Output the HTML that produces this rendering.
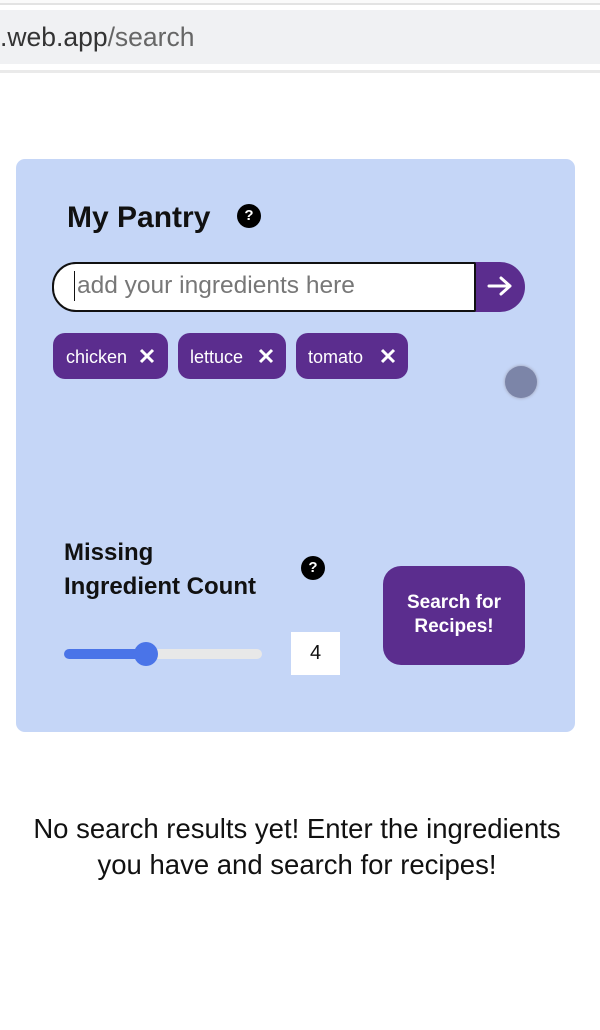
<!DOCTYPE html>
<html><head><style>
*{margin:0;padding:0;box-sizing:border-box}
body{width:600px;height:1030px;background:#fff;position:relative;overflow:hidden;font-family:"Liberation Sans",sans-serif}
.a{position:absolute}
</style></head><body>
<div class="a" style="left:0;top:0;width:600px;height:5px;border-bottom:2px solid #e3e3e3;background:#fafafa"></div>
<div class="a" style="left:0;top:10px;width:600px;height:54px;background:#f0f1f3"></div>
<div class="a" style="left:0;top:21px;font-size:26.5px;color:#333;line-height:32px">.web.app<span style="color:#666">/search</span></div>
<div class="a" style="left:0;top:70px;width:600px;height:3px;background:#eaeaea"></div>

<div class="a" style="left:16px;top:159px;width:559px;height:573px;background:#c5d6f7;border-radius:9px"></div>
<div class="a" style="left:67px;top:200px;font-size:30px;font-weight:bold;line-height:36px;color:#111">My Pantry</div>
<div class="a" style="left:237px;top:204px;width:24px;height:24px;border-radius:50%;background:#000;color:#fff;font-size:15px;font-weight:bold;text-align:center;line-height:24px">?</div>

<div class="a" style="left:52px;top:262px;width:473px;height:50px;background:#5b2d8e;border-radius:25px"></div>
<div class="a" style="left:52px;top:262px;width:424px;height:50px;background:#fff;border:2px solid #111;border-radius:24px 2px 2px 24px"></div>
<div class="a" style="left:74px;top:271px;font-size:24.5px;color:#777;line-height:30px;border-left:1px solid #111;padding-left:2px">add your ingredients here</div>
<svg class="a" style="left:486px;top:274px" width="28" height="24" viewBox="0 0 28 24"><path d="M3 12H24M15 4L24 12L15 20" stroke="#fff" stroke-width="3" fill="none" stroke-linecap="round" stroke-linejoin="round"/></svg>

<div class="a" style="left:53px;top:333px;width:115px;height:46px;background:#5b2d8e;border-radius:12px"></div>
<div class="a" style="left:178px;top:333px;width:108px;height:46px;background:#5b2d8e;border-radius:12px"></div>
<div class="a" style="left:296px;top:333px;width:112px;height:46px;background:#5b2d8e;border-radius:12px"></div>
<div class="a" style="left:66px;top:346px;font-size:18px;color:#fff;line-height:22px">chicken</div>
<div class="a" style="left:190px;top:346px;font-size:18px;color:#fff;line-height:22px">lettuce</div>
<div class="a" style="left:308px;top:346px;font-size:18px;color:#fff;line-height:22px">tomato</div>
<svg class="a" style="left:139px;top:348px" width="16" height="16"><path d="M2 2L14 14M14 2L2 14" stroke="#fff" stroke-width="3"/></svg>
<svg class="a" style="left:258px;top:348px" width="16" height="16"><path d="M2 2L14 14M14 2L2 14" stroke="#fff" stroke-width="3"/></svg>
<svg class="a" style="left:380px;top:348px" width="16" height="16"><path d="M2 2L14 14M14 2L2 14" stroke="#fff" stroke-width="3"/></svg>
<div class="a" style="left:505px;top:366px;width:32px;height:32px;border-radius:50%;background:#7c85a8;box-shadow:0 0 3px #99a"></div>

<div class="a" style="left:64px;top:536px;font-size:24px;font-weight:bold;line-height:34px;color:#111">Missing<br>Ingredient Count</div>
<div class="a" style="left:301px;top:556px;width:24px;height:24px;border-radius:50%;background:#000;color:#fff;font-size:15px;font-weight:bold;text-align:center;line-height:24px">?</div>
<div class="a" style="left:64px;top:649px;width:198px;height:10px;border-radius:5px;background:#e8e8e8"></div>
<div class="a" style="left:64px;top:649px;width:82px;height:10px;border-radius:5px;background:#4a74e8"></div>
<div class="a" style="left:134px;top:642px;width:24px;height:24px;border-radius:50%;background:#4a74e8"></div>
<div class="a" style="left:291px;top:632px;width:49px;height:43px;background:#fff;font-size:20px;text-align:center;line-height:43px;color:#111">4</div>
<div class="a" style="left:383px;top:566px;width:142px;height:99px;background:#5b2d8e;border-radius:18px;color:#fff;font-size:19px;font-weight:bold;text-align:center;line-height:24px;padding-top:25px">Search for<br>Recipes!</div>

<div class="a" style="left:0;top:811px;width:594px;text-align:center;font-size:27.5px;line-height:36px;color:#111">No search results yet! Enter the ingredients<br>you have and search for recipes!</div>
</body></html>
